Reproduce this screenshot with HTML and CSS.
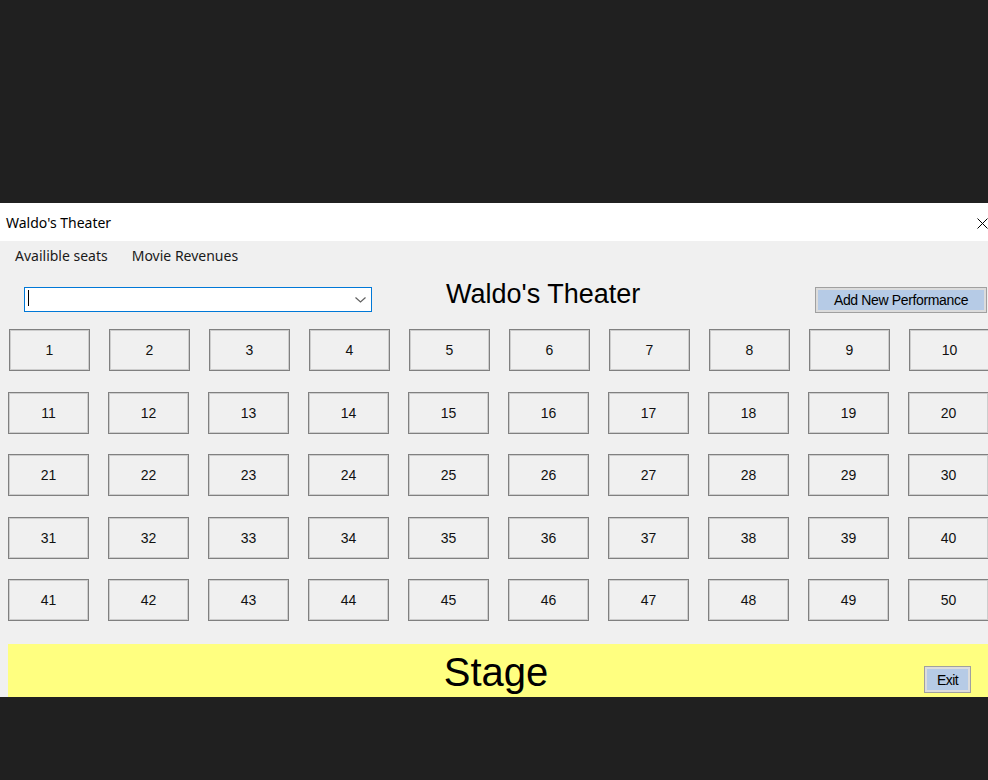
FILE: index.html
```html
<!DOCTYPE html>
<html lang="en">
<head>
<meta charset="utf-8">
<title>Waldo's Theater</title>
<link rel="stylesheet" href="styles.css">
</head>
<body>
<div class="window">
  <div class="titlebar">
    <span class="title">Waldo's Theater</span>
    <svg class="close" width="11" height="11" viewBox="0 0 11 11"><path d="M0.5 0.5 L10.5 10.5 M10.5 0.5 L0.5 10.5" stroke="#000" stroke-width="1" fill="none"/></svg>
  </div>
  <div class="menubar">
    <span class="menu-item">Availible seats</span>
    <span class="menu-item">Movie Revenues</span>
  </div>
  <div class="toolbar">
    <div class="combo">
      <span class="caret"></span>
      <svg class="chevron" width="11" height="6" viewBox="0 0 11 6"><path d="M0.5 0.5 L5.5 5 L10.5 0.5" stroke="#606060" stroke-width="1.2" fill="none"/></svg>
    </div>
    <h1 class="heading">Waldo's Theater</h1>
    <button class="win-btn add-btn">Add New Performance</button>
  </div>
  <div class="seats">
    <button class="seat r1">1</button><button class="seat r1">2</button><button class="seat r1">3</button><button class="seat r1">4</button><button class="seat r1">5</button><button class="seat r1">6</button><button class="seat r1">7</button><button class="seat r1">8</button><button class="seat r1">9</button><button class="seat r1">10</button>
    <button class="seat">11</button><button class="seat">12</button><button class="seat">13</button><button class="seat">14</button><button class="seat">15</button><button class="seat">16</button><button class="seat">17</button><button class="seat">18</button><button class="seat">19</button><button class="seat">20</button>
    <button class="seat">21</button><button class="seat">22</button><button class="seat">23</button><button class="seat">24</button><button class="seat">25</button><button class="seat">26</button><button class="seat">27</button><button class="seat">28</button><button class="seat">29</button><button class="seat">30</button>
    <button class="seat">31</button><button class="seat">32</button><button class="seat">33</button><button class="seat">34</button><button class="seat">35</button><button class="seat">36</button><button class="seat">37</button><button class="seat">38</button><button class="seat">39</button><button class="seat">40</button>
    <button class="seat">41</button><button class="seat">42</button><button class="seat">43</button><button class="seat">44</button><button class="seat">45</button><button class="seat">46</button><button class="seat">47</button><button class="seat">48</button><button class="seat">49</button><button class="seat">50</button>
  </div>
  <div class="stage">
    <span class="stage-label">Stage</span>
    <button class="win-btn exit-btn">Exit</button>
  </div>
</div>
</body>
</html>
```

FILE: styles.css
```css
html, body {
  margin: 0;
  padding: 0;
}
body {
  background: #202020;
  height: 780px;
  overflow: hidden;
  padding-top: 203px;
  box-sizing: border-box;
  font-family: "Liberation Sans", Arial, sans-serif;
}
.window {
  width: 988px;
  height: 494px;
  background: #f0f0f0;
  display: flex;
  flex-direction: column;
  overflow: hidden;
}
.titlebar {
  height: 38px;
  flex: none;
  background: #ffffff;
  display: flex;
  align-items: center;
  justify-content: space-between;
  padding: 0 0 0 6px;
}
.title {
  font-family: "Noto Sans", sans-serif;
  font-size: 14px;
  color: #000;
}
.close {
  margin-right: 0;
  margin-top: 2px;
  flex: none;
}
.menubar {
  height: 28px;
  flex: none;
  display: flex;
  align-items: center;
  padding-left: 15px;
  gap: 24px;
}
.menu-item {
  font-family: "Noto Sans", sans-serif;
  font-size: 14px;
  color: #1a1a1a;
  margin-top: 1px;
}
.toolbar {
  margin-top: 18px;
  height: 26px;
  flex: none;
  display: flex;
  align-items: flex-start;
}
.combo {
  margin-left: 24px;
  width: 348px;
  height: 25px;
  box-sizing: border-box;
  border: 1px solid #0078d7;
  background: #ffffff;
  display: flex;
  align-items: center;
  justify-content: space-between;
  padding: 0 5px 0 3px;
}
.caret {
  width: 1px;
  height: 16px;
  background: #000;
  margin-top: -4px;
}
.chevron {
  margin-top: 1px;
}
.heading {
  margin: -8px 0 0 74px;
  font-size: 27px;
  font-weight: normal;
  line-height: 30px;
  color: #000;
  white-space: nowrap;
}
.win-btn {
  font-family: "Liberation Sans", Arial, sans-serif;
  color: #000;
  background: #b6cbe6;
  border: 1px solid #a0a0a0;
  box-shadow: inset 0 0 0 2px #dcdcdc;
  padding: 0;
  box-sizing: border-box;
}
.add-btn {
  margin-left: auto;
  margin-right: 1px;
  width: 172px;
  height: 26px;
  font-size: 14px;
  letter-spacing: -0.35px;
}
.seats {
  margin: 16px 0 0 8px;
  display: grid;
  grid-template-columns: repeat(10, 81px);
  grid-auto-rows: 42px;
  column-gap: 19px;
  row-gap: 20.5px;
  flex: none;
}
.seat {
  width: 81px;
  height: 42px;
  box-sizing: border-box;
  background: #f0f0f0;
  border: 1px solid #808080;
  box-shadow: inset 0 0 0 1px #cdcdcd;
  font-family: "Liberation Sans", Arial, sans-serif;
  font-size: 14px;
  color: #111;
  padding: 0;
}
.seat.r1 {
  margin-left: 1px;
}
.stage {
  position: relative;
  margin: 23px 0 0 8px;
  flex: 1;
  background: #ffff80;
  display: flex;
  justify-content: center;
  padding-top: 5px;
  box-sizing: border-box;
}
.stage-label {
  font-size: 40px;
  line-height: 46px;
  color: #000;
  margin-left: -4px;
}
.exit-btn {
  position: absolute;
  right: 17px;
  bottom: 4px;
  width: 47px;
  height: 27px;
  font-size: 14px;
  letter-spacing: -0.6px;
}
```
